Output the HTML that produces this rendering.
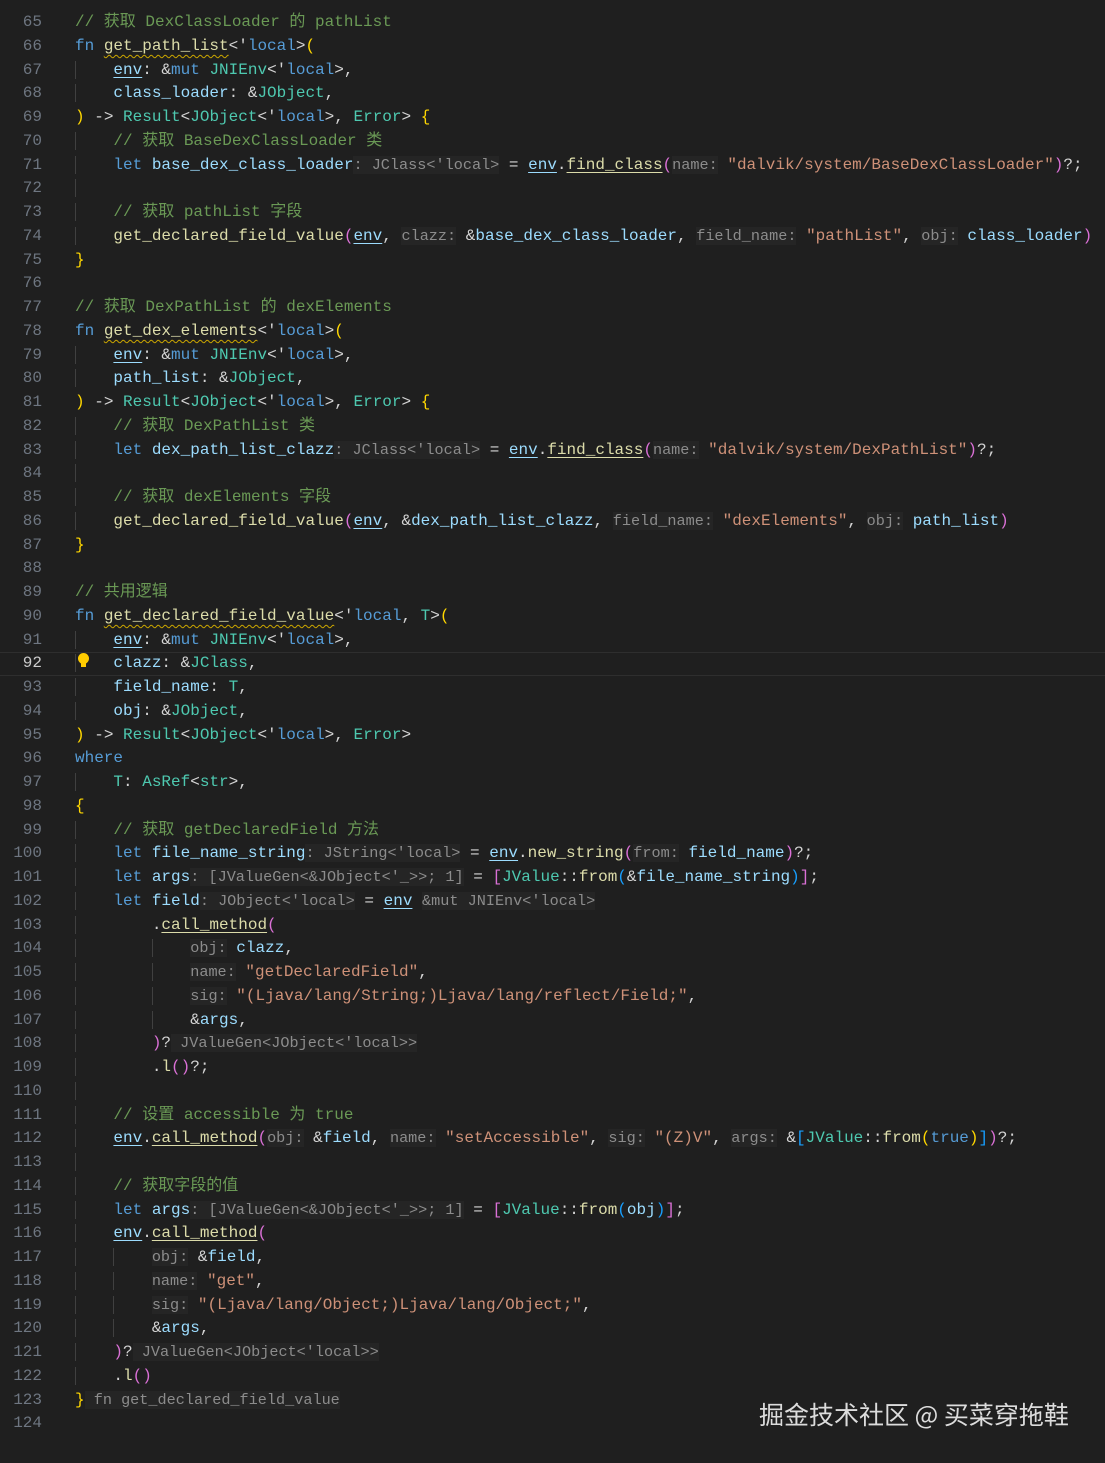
<!DOCTYPE html><html><head><meta charset="utf-8"><style>
body{margin:0;background:#1f1f1f;width:1105px;height:1463px;overflow:hidden;position:relative;font-family:"Liberation Mono","Noto Sans CJK SC",monospace;font-size:16px;color:#d4d4d4}
.ln{position:absolute;left:0;height:23.75px;line-height:23.75px;width:1105px;white-space:pre;margin-top:3px}
.n{display:inline-block;width:42px;text-align:right;color:#6e7681;margin-right:33px}
.cur .n{color:#cccccc}
.cur{box-shadow:inset 0 1px 0 #2e2e2e,inset 0 -1px 0 #2e2e2e}
i{font-style:normal;box-shadow:inset 1px 0 0 #404040}
.c{color:#6a9955}.k{color:#569cd6}.f{color:#dcdcaa}.v{color:#9cdcfe}.t{color:#4ec9b0}.s{color:#ce9178}
.h{color:#8c8c8c;background:#252525;font-size:15.2px}.y{color:#ffd700}.p{color:#da70d6}.b{color:#179fff}.l{color:#569cd6}
.u{text-decoration:underline;text-underline-offset:3px}
.w{text-decoration:underline wavy #cca700;text-underline-offset:4px;text-decoration-thickness:1px}
.wm{position:absolute;left:759px;top:1396px;font-family:"Noto Sans CJK SC",sans-serif;font-size:25px;color:#dcdcdc;white-space:pre}
.bulb{position:absolute;left:78px;top:653px;width:11px;height:11px;border-radius:50%;background:#ffcc00}
.bulb:after{content:"";position:absolute;left:3px;top:10px;width:5px;height:4px;background:#ffcc00}
</style></head><body>
<div class="ln" style="top:8px"><span class="n">65</span><span class="c">// 获取 DexClassLoader 的 pathList</span></div>
<div class="ln" style="top:31.75px"><span class="n">66</span><span class="k">fn</span> <span class="f w">get_path_list</span>&lt;'<span class="l">local</span>&gt;<span class="y">(</span></div>
<div class="ln" style="top:55.5px"><span class="n">67</span><i>    </i><span class="v u">env</span>: &amp;<span class="k">mut</span> <span class="t">JNIEnv</span>&lt;'<span class="l">local</span>&gt;,</div>
<div class="ln" style="top:79.25px"><span class="n">68</span><i>    </i><span class="v">class_loader</span>: &amp;<span class="t">JObject</span>,</div>
<div class="ln" style="top:103px"><span class="n">69</span><span class="y">)</span> -&gt; <span class="t">Result</span>&lt;<span class="t">JObject</span>&lt;'<span class="l">local</span>&gt;, <span class="t">Error</span>&gt; <span class="y">{</span></div>
<div class="ln" style="top:126.75px"><span class="n">70</span><i>    </i><span class="c">// 获取 BaseDexClassLoader 类</span></div>
<div class="ln" style="top:150.5px"><span class="n">71</span><i>    </i><span class="k">let</span> <span class="v">base_dex_class_loader</span><span class="h">: JClass&lt;'local&gt;</span> = <span class="v u">env</span>.<span class="f u">find_class</span><span class="p">(</span><span class="h">name:</span> <span class="s">"dalvik/system/BaseDexClassLoader"</span><span class="p">)</span>?;</div>
<div class="ln" style="top:174.25px"><span class="n">72</span><i>    </i></div>
<div class="ln" style="top:198px"><span class="n">73</span><i>    </i><span class="c">// 获取 pathList 字段</span></div>
<div class="ln" style="top:221.75px"><span class="n">74</span><i>    </i><span class="f">get_declared_field_value</span><span class="p">(</span><span class="v u">env</span>, <span class="h">clazz:</span> &amp;<span class="v">base_dex_class_loader</span>, <span class="h">field_name:</span> <span class="s">"pathList"</span>, <span class="h">obj:</span> <span class="v">class_loader</span><span class="p">)</span></div>
<div class="ln" style="top:245.5px"><span class="n">75</span><span class="y">}</span></div>
<div class="ln" style="top:269.25px"><span class="n">76</span></div>
<div class="ln" style="top:293px"><span class="n">77</span><span class="c">// 获取 DexPathList 的 dexElements</span></div>
<div class="ln" style="top:316.75px"><span class="n">78</span><span class="k">fn</span> <span class="f w">get_dex_elements</span>&lt;'<span class="l">local</span>&gt;<span class="y">(</span></div>
<div class="ln" style="top:340.5px"><span class="n">79</span><i>    </i><span class="v u">env</span>: &amp;<span class="k">mut</span> <span class="t">JNIEnv</span>&lt;'<span class="l">local</span>&gt;,</div>
<div class="ln" style="top:364.25px"><span class="n">80</span><i>    </i><span class="v">path_list</span>: &amp;<span class="t">JObject</span>,</div>
<div class="ln" style="top:388px"><span class="n">81</span><span class="y">)</span> -&gt; <span class="t">Result</span>&lt;<span class="t">JObject</span>&lt;'<span class="l">local</span>&gt;, <span class="t">Error</span>&gt; <span class="y">{</span></div>
<div class="ln" style="top:411.75px"><span class="n">82</span><i>    </i><span class="c">// 获取 DexPathList 类</span></div>
<div class="ln" style="top:435.5px"><span class="n">83</span><i>    </i><span class="k">let</span> <span class="v">dex_path_list_clazz</span><span class="h">: JClass&lt;'local&gt;</span> = <span class="v u">env</span>.<span class="f u">find_class</span><span class="p">(</span><span class="h">name:</span> <span class="s">"dalvik/system/DexPathList"</span><span class="p">)</span>?;</div>
<div class="ln" style="top:459.25px"><span class="n">84</span><i>    </i></div>
<div class="ln" style="top:483px"><span class="n">85</span><i>    </i><span class="c">// 获取 dexElements 字段</span></div>
<div class="ln" style="top:506.75px"><span class="n">86</span><i>    </i><span class="f">get_declared_field_value</span><span class="p">(</span><span class="v u">env</span>, &amp;<span class="v">dex_path_list_clazz</span>, <span class="h">field_name:</span> <span class="s">"dexElements"</span>, <span class="h">obj:</span> <span class="v">path_list</span><span class="p">)</span></div>
<div class="ln" style="top:530.5px"><span class="n">87</span><span class="y">}</span></div>
<div class="ln" style="top:554.25px"><span class="n">88</span></div>
<div class="ln" style="top:578px"><span class="n">89</span><span class="c">// 共用逻辑</span></div>
<div class="ln" style="top:601.75px"><span class="n">90</span><span class="k">fn</span> <span class="f w">get_declared_field_value</span>&lt;'<span class="l">local</span>, <span class="t">T</span>&gt;<span class="y">(</span></div>
<div class="ln" style="top:625.5px"><span class="n">91</span><i>    </i><span class="v u">env</span>: &amp;<span class="k">mut</span> <span class="t">JNIEnv</span>&lt;'<span class="l">local</span>&gt;,</div>
<div class="ln cur" style="top:649.25px"><span class="n">92</span><i>    </i><span class="v">clazz</span>: &amp;<span class="t">JClass</span>,</div>
<div class="ln" style="top:673px"><span class="n">93</span><i>    </i><span class="v">field_name</span>: <span class="t">T</span>,</div>
<div class="ln" style="top:696.75px"><span class="n">94</span><i>    </i><span class="v">obj</span>: &amp;<span class="t">JObject</span>,</div>
<div class="ln" style="top:720.5px"><span class="n">95</span><span class="y">)</span> -&gt; <span class="t">Result</span>&lt;<span class="t">JObject</span>&lt;'<span class="l">local</span>&gt;, <span class="t">Error</span>&gt;</div>
<div class="ln" style="top:744.25px"><span class="n">96</span><span class="k">where</span></div>
<div class="ln" style="top:768px"><span class="n">97</span><i>    </i><span class="t">T</span>: <span class="t">AsRef</span>&lt;<span class="t">str</span>&gt;,</div>
<div class="ln" style="top:791.75px"><span class="n">98</span><span class="y">{</span></div>
<div class="ln" style="top:815.5px"><span class="n">99</span><i>    </i><span class="c">// 获取 getDeclaredField 方法</span></div>
<div class="ln" style="top:839.25px"><span class="n">100</span><i>    </i><span class="k">let</span> <span class="v">file_name_string</span><span class="h">: JString&lt;'local&gt;</span> = <span class="v u">env</span>.<span class="f">new_string</span><span class="p">(</span><span class="h">from:</span> <span class="v">field_name</span><span class="p">)</span>?;</div>
<div class="ln" style="top:863px"><span class="n">101</span><i>    </i><span class="k">let</span> <span class="v">args</span><span class="h">: [JValueGen&lt;&amp;JObject&lt;'_&gt;&gt;; 1]</span> = <span class="p">[</span><span class="t">JValue</span>::<span class="f">from</span><span class="b">(</span>&amp;<span class="v">file_name_string</span><span class="b">)</span><span class="p">]</span>;</div>
<div class="ln" style="top:886.75px"><span class="n">102</span><i>    </i><span class="k">let</span> <span class="v">field</span><span class="h">: JObject&lt;'local&gt;</span> = <span class="v u">env</span> <span class="h">&amp;mut JNIEnv&lt;'local&gt;</span></div>
<div class="ln" style="top:910.5px"><span class="n">103</span><i>    </i>    .<span class="f u">call_method</span><span class="p">(</span></div>
<div class="ln" style="top:934.25px"><span class="n">104</span><i>    </i>    <i>    </i><span class="h">obj:</span> <span class="v">clazz</span>,</div>
<div class="ln" style="top:958px"><span class="n">105</span><i>    </i>    <i>    </i><span class="h">name:</span> <span class="s">"getDeclaredField"</span>,</div>
<div class="ln" style="top:981.75px"><span class="n">106</span><i>    </i>    <i>    </i><span class="h">sig:</span> <span class="s">"(Ljava/lang/String;)Ljava/lang/reflect/Field;"</span>,</div>
<div class="ln" style="top:1005.5px"><span class="n">107</span><i>    </i>    <i>    </i>&amp;<span class="v">args</span>,</div>
<div class="ln" style="top:1029.25px"><span class="n">108</span><i>    </i>    <span class="p">)</span>?<span class="h"> JValueGen&lt;JObject&lt;'local&gt;&gt;</span></div>
<div class="ln" style="top:1053px"><span class="n">109</span><i>    </i>    .<span class="f">l</span><span class="p">()</span>?;</div>
<div class="ln" style="top:1076.75px"><span class="n">110</span><i>    </i></div>
<div class="ln" style="top:1100.5px"><span class="n">111</span><i>    </i><span class="c">// 设置 accessible 为 true</span></div>
<div class="ln" style="top:1124.25px"><span class="n">112</span><i>    </i><span class="v u">env</span>.<span class="f u">call_method</span><span class="p">(</span><span class="h">obj:</span> &amp;<span class="v">field</span>, <span class="h">name:</span> <span class="s">"setAccessible"</span>, <span class="h">sig:</span> <span class="s">"(Z)V"</span>, <span class="h">args:</span> &amp;<span class="b">[</span><span class="t">JValue</span>::<span class="f">from</span><span class="y">(</span><span class="k">true</span><span class="y">)</span><span class="b">]</span><span class="p">)</span>?;</div>
<div class="ln" style="top:1148px"><span class="n">113</span><i>    </i></div>
<div class="ln" style="top:1171.75px"><span class="n">114</span><i>    </i><span class="c">// 获取字段的值</span></div>
<div class="ln" style="top:1195.5px"><span class="n">115</span><i>    </i><span class="k">let</span> <span class="v">args</span><span class="h">: [JValueGen&lt;&amp;JObject&lt;'_&gt;&gt;; 1]</span> = <span class="p">[</span><span class="t">JValue</span>::<span class="f">from</span><span class="b">(</span><span class="v">obj</span><span class="b">)</span><span class="p">]</span>;</div>
<div class="ln" style="top:1219.25px"><span class="n">116</span><i>    </i><span class="v u">env</span>.<span class="f u">call_method</span><span class="p">(</span></div>
<div class="ln" style="top:1243px"><span class="n">117</span><i>    </i><i>    </i><span class="h">obj:</span> &amp;<span class="v">field</span>,</div>
<div class="ln" style="top:1266.75px"><span class="n">118</span><i>    </i><i>    </i><span class="h">name:</span> <span class="s">"get"</span>,</div>
<div class="ln" style="top:1290.5px"><span class="n">119</span><i>    </i><i>    </i><span class="h">sig:</span> <span class="s">"(Ljava/lang/Object;)Ljava/lang/Object;"</span>,</div>
<div class="ln" style="top:1314.25px"><span class="n">120</span><i>    </i><i>    </i>&amp;<span class="v">args</span>,</div>
<div class="ln" style="top:1338px"><span class="n">121</span><i>    </i><span class="p">)</span>?<span class="h"> JValueGen&lt;JObject&lt;'local&gt;&gt;</span></div>
<div class="ln" style="top:1361.75px"><span class="n">122</span><i>    </i>.<span class="f">l</span><span class="p">()</span></div>
<div class="ln" style="top:1385.5px"><span class="n">123</span><span class="y">}</span><span class="h"> fn get_declared_field_value</span></div>
<div class="ln" style="top:1409.25px"><span class="n">124</span></div>
<div class="bulb"></div>
<div class="wm">掘金技术社区 @ 买菜穿拖鞋</div>
</body></html>
